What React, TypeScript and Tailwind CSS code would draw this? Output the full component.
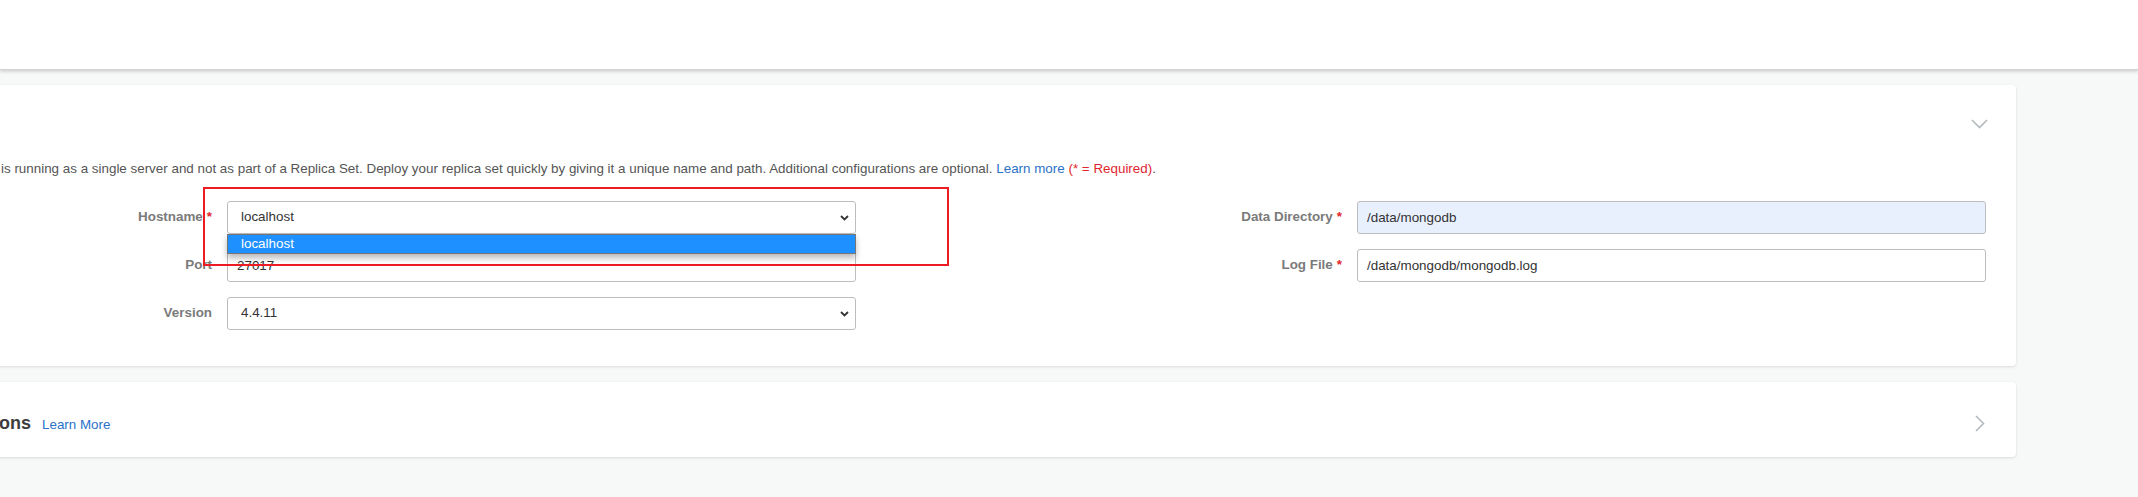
import React from "react";

function ChevronDown({ className }: { className?: string }) {
  return (
    <svg width="17" height="10" viewBox="0 0 17 10" fill="none" className={className}>
      <path d="M1 1l7.5 7.5L16 1" stroke="#b3babe" strokeWidth="1.6" />
    </svg>
  );
}

function ChevronRight({ className }: { className?: string }) {
  return (
    <svg width="10" height="17" viewBox="0 0 10 17" fill="none" className={className}>
      <path d="M1 1l7.5 7.5L1 16" stroke="#b3babe" strokeWidth="1.6" />
    </svg>
  );
}

function SelectCaret() {
  return (
    <svg width="9" height="6" viewBox="0 0 9 6" fill="none">
      <path d="M1 1l3.5 3.5L8 1" stroke="#333" strokeWidth="1.8" />
    </svg>
  );
}

function Label({ text, required }: { text: string; required?: boolean }) {
  return (
    <label className="flex justify-end items-center text-[13.4px] font-bold text-[#7a7a7a] whitespace-nowrap">
      {text}
      {required && <span className="ml-[4px] text-[#e0262e]">*</span>}
    </label>
  );
}

function FakeSelect({ value, children }: { value: string; children?: React.ReactNode }) {
  return (
    <div className="relative h-[33px]">
      <div className="h-full flex items-center justify-between border border-[#bdbdbd] rounded-[3px] bg-white pl-[13px] pr-[6px] text-[13.4px] text-[#333]">
        <span>{value}</span>
        <SelectCaret />
      </div>
      {children}
    </div>
  );
}

function TextInput({ value, autofill }: { value: string; autofill?: boolean }) {
  return (
    <input
      readOnly
      value={value}
      className={`h-[33px] w-full border border-[#bdbdbd] rounded-[3px] px-[9px] text-[13.4px] text-[#333] outline-none ${
        autofill ? "bg-[#e8f0fe]" : "bg-white"
      }`}
    />
  );
}

export default function App() {
  return (
    <div className="min-h-[497px] bg-[#f7f8f8] font-['Liberation_Sans',Arial,sans-serif] overflow-hidden">
      <header className="h-[70px] bg-white border-b border-[#d0d3d3] shadow-[0_2px_3px_rgba(0,0,0,0.14)] relative z-10" />

      <main className="pt-[15px] pr-[122px]">
        {/* replica set card */}
        <section className="-ml-[30px] bg-white rounded-[4px] shadow-[0_1px_3px_rgba(0,0,0,0.12)] px-[30px] pb-[36px]">
          <div className="h-[75px] pt-[3px] flex items-center justify-end">
            <ChevronDown className="-mr-[2px]" />
          </div>

          <p className="text-[13.4px] leading-[18px] text-[#555] whitespace-nowrap pl-[1px]">
            is running as a single server and not as part of a Replica Set. Deploy your replica set quickly by
            giving it a unique name and path. Additional configurations are optional.{" "}
            <a className="text-[#2a72c8]">Learn more</a>{" "}
            <span className="text-[#e0262e]">(* = Required)</span>.
          </p>

          <div className="mt-[23px] grid grid-cols-[212px_629px_1fr_629px] gap-x-[15px] gap-y-[15px]">
            <Label text="Hostname" required />
            <FakeSelect value="localhost">
              {/* open dropdown */}
              <div className="absolute left-0 right-0 top-full h-[20px] border border-[#767676] bg-[#1e90ff] shadow-[0_4px_6px_rgba(0,0,0,0.28)] flex items-center pl-[13px] text-[13.4px] text-white z-20">
                localhost
              </div>
              {/* annotation box */}
              <div className="absolute -left-[24px] -top-[14px] w-[746px] h-[79px] border-2 border-[#ed1c24] z-30 pointer-events-none" />
            </FakeSelect>
            <Label text="Data Directory" required />
            <TextInput value="/data/mongodb" autofill />

            <Label text="Port" />
            <TextInput value="27017" />
            <Label text="Log File" required />
            <TextInput value="/data/mongodb/mongodb.log" />

            <Label text="Version" />
            <FakeSelect value="4.4.11" />
            <div />
            <div />
          </div>
        </section>

        {/* advanced options card */}
        <section className="-ml-[30px] mt-[16px] bg-white rounded-[4px] shadow-[0_1px_3px_rgba(0,0,0,0.12)] pl-[30px] pr-[30px] h-[75px] pt-[8px] flex items-center justify-between">
          <div className="flex items-baseline">
            <div className="w-[31px] flex justify-end">
              <span className="text-[18px] font-bold text-[#3d3d3d] whitespace-nowrap">ons</span>
            </div>
            <a className="ml-[11px] text-[13.4px] text-[#2a72c8]">Learn More</a>
          </div>
          <ChevronRight className="mr-[1px]" />
        </section>
      </main>
    </div>
  );
}
